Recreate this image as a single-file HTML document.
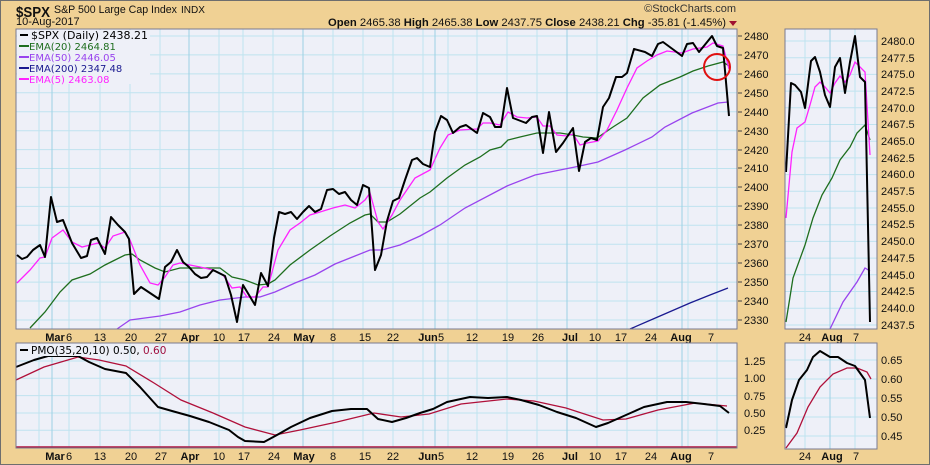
<!DOCTYPE html>
<html><head><meta charset="utf-8"><style>
html,body{margin:0;padding:0;background:#f0d194;}
svg{display:block;font-family:"Liberation Sans",Arial,sans-serif;}
</style></head><body>
<svg width="930" height="465" viewBox="0 0 930 465" xmlns="http://www.w3.org/2000/svg">
<rect x="0.5" y="0.5" width="929" height="464" fill="#f0d194" stroke="#6e6e6e"/>
<!-- header -->
<text x="16" y="17" font-size="15" font-weight="bold" fill="#111" textLength="34" lengthAdjust="spacingAndGlyphs">$SPX</text>
<text x="54" y="13" font-size="11" fill="#111" textLength="123" lengthAdjust="spacingAndGlyphs">S&amp;P 500 Large Cap Index</text>
<text x="181" y="13" font-size="10" fill="#111">INDX</text>
<text x="16" y="25" font-size="11" fill="#111">10-Aug-2017</text>
<text x="736" y="12" font-size="11" fill="#333" text-anchor="end">©StockCharts.com</text>
<text x="328" y="26" font-size="11" fill="#111" textLength="398" lengthAdjust="spacingAndGlyphs"><tspan font-weight="bold">Open</tspan> 2465.38  <tspan font-weight="bold">High</tspan> 2465.38  <tspan font-weight="bold">Low</tspan> 2437.75  <tspan font-weight="bold">Close</tspan> 2438.21  <tspan font-weight="bold">Chg</tspan> -35.81 (-1.45%)</text>
<polygon points="729,21 737,21 733,26" fill="#a01030"/>

<!-- main panel -->
<rect x="16" y="29" width="721" height="300" fill="#eef0f8"/>
<g stroke="#bfe3ef" stroke-width="1">
<line x1="16" x2="737" y1="36" y2="36"/><line x1="16" x2="737" y1="54.9" y2="54.9"/><line x1="16" x2="737" y1="73.9" y2="73.9"/><line x1="16" x2="737" y1="92.8" y2="92.8"/><line x1="16" x2="737" y1="111.7" y2="111.7"/><line x1="16" x2="737" y1="130.7" y2="130.7"/><line x1="16" x2="737" y1="149.6" y2="149.6"/><line x1="16" x2="737" y1="168.5" y2="168.5"/><line x1="16" x2="737" y1="187.4" y2="187.4"/><line x1="16" x2="737" y1="206.4" y2="206.4"/><line x1="16" x2="737" y1="225.3" y2="225.3"/><line x1="16" x2="737" y1="244.2" y2="244.2"/><line x1="16" x2="737" y1="263.2" y2="263.2"/><line x1="16" x2="737" y1="282.1" y2="282.1"/><line x1="16" x2="737" y1="301" y2="301"/><line x1="16" x2="737" y1="320" y2="320"/>
<line x1="39" x2="39" y1="29" y2="329"/><line x1="69" x2="69" y1="29" y2="329"/><line x1="100" x2="100" y1="29" y2="329"/><line x1="130" x2="130" y1="29" y2="329"/><line x1="160" x2="160" y1="29" y2="329"/><line x1="219" x2="219" y1="29" y2="329"/><line x1="243" x2="243" y1="29" y2="329"/><line x1="273" x2="273" y1="29" y2="329"/><line x1="333" x2="333" y1="29" y2="329"/><line x1="363" x2="363" y1="29" y2="329"/><line x1="393" x2="393" y1="29" y2="329"/><line x1="423" x2="423" y1="29" y2="329"/><line x1="448" x2="448" y1="29" y2="329"/><line x1="477" x2="477" y1="29" y2="329"/><line x1="507" x2="507" y1="29" y2="329"/><line x1="537" x2="537" y1="29" y2="329"/><line x1="597" x2="597" y1="29" y2="329"/><line x1="627" x2="627" y1="29" y2="329"/><line x1="657" x2="657" y1="29" y2="329"/><line x1="688" x2="688" y1="29" y2="329"/><line x1="717" x2="717" y1="29" y2="329"/>
</g>
<g stroke="#9cd1e4" stroke-width="1">
<line x1="52" x2="52" y1="29" y2="329"/><line x1="189" x2="189" y1="29" y2="329"/><line x1="303" x2="303" y1="29" y2="329"/><line x1="435" x2="435" y1="29" y2="329"/><line x1="567" x2="567" y1="29" y2="329"/><line x1="682" x2="682" y1="29" y2="329"/>
</g>
<polyline fill="none" stroke="#1a1a90" stroke-width="1.3" points="630,329 660,316 690,303 710,295 728,288"/>
<polyline fill="none" stroke="#9944ee" stroke-width="1.3" points="117,329 130,320 160,316 180,312 200,305 220,300 245,297 260,297 275,292 295,283 315,275 335,264 355,256 370,250 382,250 400,245 420,236 440,225 465,208 507,186 535,175 575,167 598,162 625,150 652,137 665,127 692,113 718,103 728,102"/>
<polyline fill="none" stroke="#1e6e1e" stroke-width="1.3" points="30,328 45,312 60,292 72,280 90,274 105,265 115,260 125,255 132,254 140,260 155,268 165,272 180,268 200,268 220,268 232,277 245,280 258,285 268,284 275,280 290,265 310,250 330,236 350,223 365,215 370,214 378,222 387,222 400,214 420,198 430,192 447,178 465,165 480,157 490,150 501,147 508,140 520,137 537,133 547,133 560,133 573,135 583,137 597,138 613,127 627,118 643,98 660,85 680,77 693,71 708,66 723,62 729,66"/>
<polyline fill="none" stroke="#ff22ff" stroke-width="1.3" points="17,283 30,270 40,258 45,257 52,238 63,230 72,242 82,247 90,245 98,243 105,248 113,236 125,232 130,240 140,265 150,283 158,285 165,277 173,265 180,263 190,265 200,267 213,270 223,275 232,288 240,287 247,297 255,297 263,287 268,287 278,250 290,230 300,223 310,215 320,212 333,208 345,205 355,208 365,200 370,193 378,222 383,229 392,215 400,200 415,178 430,170 440,148 448,135 460,130 477,129 483,123 490,123 500,125 508,112 517,117 527,118 537,117 543,126 550,126 557,135 567,136 573,134 580,145 587,143 598,141 607,130 617,110 627,88 637,68 647,61 657,55 667,51 682,53 693,49 707,47 713,43 723,46 729,69"/>
<polyline fill="none" stroke="#000" stroke-width="2" stroke-linejoin="round" points="17,255 22,259 27,257 33,250 40,245 45,257 51,197 57,222 63,220 72,243 81,258 87,256 91,240 97,238 105,254 111,217 118,225 125,232 129,239 134,294 141,287 147,291 153,295 159,299 165,267 171,262 177,250 183,262 189,267 195,274 201,278 207,277 213,270 219,273 225,276 231,295 237,322 243,285 249,295 255,305 261,273 268,286 274,238 279,212 285,214 291,212 297,219 303,212 309,206 315,212 321,209 327,190 333,189 339,194 345,192 351,200 357,205 363,185 369,188 375,270 381,255 387,221 393,201 399,198 405,180 412,160 417,158 423,164 430,167 435,132 441,116 447,120 453,133 460,127 466,125 477,133 483,113 490,117 495,127 501,127 507,88 513,118 526,123 532,117 537,116 543,153 549,112 556,152 563,143 573,128 579,171 585,142 591,138 597,140 603,107 609,98 616,77 622,77 627,73 634,49 645,52 652,56 658,44 663,42 682,56 687,44 693,43 699,52 712,36 717,46 723,48 729,116"/>
<circle cx="717" cy="67" r="13" fill="none" stroke="#e01010" stroke-width="2"/>
<rect x="17" y="30" width="133" height="54" fill="#eef0f8"/>
<g font-family="'DejaVu Sans',sans-serif" font-size="10">
<line x1="20" x2="28" y1="35" y2="35" stroke="#000" stroke-width="2"/>
<text x="31" y="39" fill="#000" font-size="11">$SPX (Daily) 2438.21</text>
<line x1="19" x2="29" y1="46" y2="46" stroke="#1e6e1e" stroke-width="2"/><text x="29" y="50" fill="#1e6e1e">EMA(20) 2464.81</text>
<line x1="19" x2="29" y1="57" y2="57" stroke="#9944ee" stroke-width="2"/><text x="29" y="61" fill="#9944ee">EMA(50) 2446.05</text>
<line x1="19" x2="29" y1="68" y2="68" stroke="#1a1a90" stroke-width="2"/><text x="29" y="72" fill="#1a1a90">EMA(200) 2347.48</text>
<line x1="19" x2="29" y1="79" y2="79" stroke="#ff22ff" stroke-width="2"/><text x="29" y="83" fill="#ff22ff">EMA(5) 2463.08</text>
</g>
<rect x="16" y="29" width="721" height="300" fill="none" stroke="#7a7a90"/>
<g font-size="11" fill="#111">
<text x="744" y="40">2480</text><text x="744" y="59">2470</text><text x="744" y="78">2460</text><text x="744" y="97">2450</text><text x="744" y="116">2440</text><text x="744" y="135">2430</text><text x="744" y="154">2420</text><text x="744" y="172">2410</text><text x="744" y="191">2400</text><text x="744" y="210">2390</text><text x="744" y="229">2380</text><text x="744" y="248">2370</text><text x="744" y="267">2360</text><text x="744" y="286">2350</text><text x="744" y="305">2340</text><text x="744" y="324">2330</text>
</g>
<g stroke="#444"><line x1="738" x2="742" y1="36" y2="36"/><line x1="738" x2="742" y1="55" y2="55"/><line x1="738" x2="742" y1="74" y2="74"/><line x1="738" x2="742" y1="93" y2="93"/><line x1="738" x2="742" y1="112" y2="112"/><line x1="738" x2="742" y1="131" y2="131"/><line x1="738" x2="742" y1="150" y2="150"/><line x1="738" x2="742" y1="168" y2="168"/><line x1="738" x2="742" y1="187" y2="187"/><line x1="738" x2="742" y1="206" y2="206"/><line x1="738" x2="742" y1="225" y2="225"/><line x1="738" x2="742" y1="244" y2="244"/><line x1="738" x2="742" y1="263" y2="263"/><line x1="738" x2="742" y1="282" y2="282"/><line x1="738" x2="742" y1="301" y2="301"/><line x1="738" x2="742" y1="320" y2="320"/></g>

<g font-size="11" fill="#111" text-anchor="middle">
<g id="dl">
<text x="55" y="341" font-weight="bold">Mar</text><text x="69" y="341">6</text><text x="100" y="341">13</text><text x="131" y="341">20</text><text x="161" y="341">27</text><text x="190" y="341" font-weight="bold">Apr</text><text x="219" y="341">10</text><text x="244" y="341">17</text><text x="274" y="341">24</text><text x="304" y="341" font-weight="bold">May</text><text x="333" y="341">8</text><text x="365" y="341">15</text><text x="393" y="341">22</text><text x="428" y="341" font-weight="bold">Jun</text><text x="441" y="341">5</text><text x="472" y="341">12</text><text x="508" y="341">19</text><text x="538" y="341">26</text><text x="570" y="341" font-weight="bold">Jul</text><text x="595" y="341">10</text><text x="621" y="341">17</text><text x="651" y="341">24</text><text x="681" y="341" font-weight="bold">Aug</text><text x="711" y="341">7</text>
<text x="805" y="341">24</text><text x="832" y="341" font-weight="bold">Aug</text><text x="856" y="341">7</text>
</g>
<use href="#dl" y="119"/>
</g>

<rect x="785" y="29" width="92" height="300" fill="#eef0f8"/>
<g stroke="#bfe3ef">
<line x1="785" x2="877" y1="41" y2="41"/><line x1="785" x2="877" y1="57.7" y2="57.7"/><line x1="785" x2="877" y1="74.4" y2="74.4"/><line x1="785" x2="877" y1="91.1" y2="91.1"/><line x1="785" x2="877" y1="107.8" y2="107.8"/><line x1="785" x2="877" y1="124.5" y2="124.5"/><line x1="785" x2="877" y1="141.2" y2="141.2"/><line x1="785" x2="877" y1="157.9" y2="157.9"/><line x1="785" x2="877" y1="174.6" y2="174.6"/><line x1="785" x2="877" y1="191.3" y2="191.3"/><line x1="785" x2="877" y1="208" y2="208"/><line x1="785" x2="877" y1="224.7" y2="224.7"/><line x1="785" x2="877" y1="241.4" y2="241.4"/><line x1="785" x2="877" y1="258.1" y2="258.1"/><line x1="785" x2="877" y1="274.8" y2="274.8"/><line x1="785" x2="877" y1="291.5" y2="291.5"/><line x1="785" x2="877" y1="308.2" y2="308.2"/><line x1="785" x2="877" y1="325" y2="325"/>
<line x1="805" x2="805" y1="29" y2="329"/><line x1="855" x2="855" y1="29" y2="329"/>
</g>
<line x1="830" x2="830" y1="29" y2="329" stroke="#9cd1e4"/>
<polyline fill="none" stroke="#9944ee" stroke-width="1.3" points="830,329 843,302 857,282 865,268 870,271"/>
<polyline fill="none" stroke="#1e6e1e" stroke-width="1.3" points="786,322 793,278 805,245 813,218 822,195 832,178 840,160 850,147 857,133 865,125 870,140"/>
<polyline fill="none" stroke="#ff22ff" stroke-width="1.3" points="786,218 792,152 797,128 805,122 810,105 815,87 820,82 825,87 830,93 835,83 840,76 845,82 850,75 855,62 860,67 865,72 870,155"/>
<polyline fill="none" stroke="#000" stroke-width="2" stroke-linejoin="round" points="786,172 791,83 795,85 801,92 805,108 811,61 815,57 820,72 825,95 830,107 835,67 840,58 845,93 850,62 855,36 860,77 865,82 870,322"/>
<rect x="785" y="29" width="92" height="300" fill="none" stroke="#7a7a90"/>
<g font-size="11" fill="#111">
<text x="881" y="45">2480.0</text><text x="881" y="62">2477.5</text><text x="881" y="78">2475.0</text><text x="881" y="95">2472.5</text><text x="881" y="112">2470.0</text><text x="881" y="128">2467.5</text><text x="881" y="145">2465.0</text><text x="881" y="162">2462.5</text><text x="881" y="178">2460.0</text><text x="881" y="195">2457.5</text><text x="881" y="212">2455.0</text><text x="881" y="228">2452.5</text><text x="881" y="245">2450.0</text><text x="881" y="262">2447.5</text><text x="881" y="279">2445.0</text><text x="881" y="295">2442.5</text><text x="881" y="312">2440.0</text><text x="881" y="329">2437.5</text>
</g>

<rect x="16" y="343" width="721" height="105" fill="#eef0f8"/>
<g stroke="#bfe3ef">
<line x1="16" x2="737" y1="361" y2="361"/><line x1="16" x2="737" y1="378.3" y2="378.3"/><line x1="16" x2="737" y1="395.6" y2="395.6"/><line x1="16" x2="737" y1="413" y2="413"/><line x1="16" x2="737" y1="430.3" y2="430.3"/>
<line x1="39" x2="39" y1="343" y2="448"/><line x1="69" x2="69" y1="343" y2="448"/><line x1="100" x2="100" y1="343" y2="448"/><line x1="130" x2="130" y1="343" y2="448"/><line x1="160" x2="160" y1="343" y2="448"/><line x1="219" x2="219" y1="343" y2="448"/><line x1="243" x2="243" y1="343" y2="448"/><line x1="273" x2="273" y1="343" y2="448"/><line x1="333" x2="333" y1="343" y2="448"/><line x1="363" x2="363" y1="343" y2="448"/><line x1="393" x2="393" y1="343" y2="448"/><line x1="423" x2="423" y1="343" y2="448"/><line x1="448" x2="448" y1="343" y2="448"/><line x1="477" x2="477" y1="343" y2="448"/><line x1="507" x2="507" y1="343" y2="448"/><line x1="537" x2="537" y1="343" y2="448"/><line x1="597" x2="597" y1="343" y2="448"/><line x1="627" x2="627" y1="343" y2="448"/><line x1="657" x2="657" y1="343" y2="448"/><line x1="688" x2="688" y1="343" y2="448"/><line x1="717" x2="717" y1="343" y2="448"/>
</g>
<g stroke="#9cd1e4">
<line x1="52" x2="52" y1="343" y2="448"/><line x1="189" x2="189" y1="343" y2="448"/><line x1="303" x2="303" y1="343" y2="448"/><line x1="435" x2="435" y1="343" y2="448"/><line x1="567" x2="567" y1="343" y2="448"/><line x1="682" x2="682" y1="343" y2="448"/>
</g>
<line x1="16" x2="737" y1="447" y2="447" stroke="#b0103a" stroke-width="1.5"/>
<polyline fill="none" stroke="#b0103a" stroke-width="1.3" points="16,380 44,367 78,357 99,360 126,366 154,383 181,400 213,413 245,427 275,435 300,430 337,422 374,413 401,417 429,414 461,404 507,399 534,401 566,408 603,420 626,419 658,410 695,403 727,406"/>
<polyline fill="none" stroke="#000" stroke-width="2" stroke-linejoin="round" points="16,367 34,360 48,356 78,356 89,362 105,369 126,373 140,387 158,407 172,411 190,416 209,422 229,430 238,437 245,441 264,442 277,435 291,427 310,418 332,411 351,409 367,409 378,419 392,422 406,418 420,413 433,409 447,402 470,397 488,398 507,397 521,400 539,405 557,412 576,418 596,427 608,423 626,415 644,407 667,402 686,402 704,404 720,406 729,413"/>
<rect x="17" y="344" width="105" height="12" fill="#eef0f8"/>
<line x1="20" x2="28" y1="350" y2="350" stroke="#000" stroke-width="2"/>
<text x="31" y="354" font-family="'DejaVu Sans',sans-serif" font-size="10.5" fill="#000">PMO(35,20,10) 0.50, <tspan fill="#a01040">0.60</tspan></text>
<rect x="16" y="343" width="721" height="105" fill="none" stroke="#7a7a90"/>
<g font-size="11" fill="#111">
<text x="744" y="365">1.25</text><text x="744" y="382">1.00</text><text x="744" y="400">0.75</text><text x="744" y="417">0.50</text><text x="744" y="434">0.25</text>
</g>

<rect x="785" y="343" width="92" height="106" fill="#eef0f8"/>
<g stroke="#bfe3ef">
<line x1="785" x2="877" y1="360" y2="360"/><line x1="785" x2="877" y1="379" y2="379"/><line x1="785" x2="877" y1="398" y2="398"/><line x1="785" x2="877" y1="417" y2="417"/><line x1="785" x2="877" y1="436" y2="436"/>
<line x1="805" x2="805" y1="343" y2="449"/><line x1="855" x2="855" y1="343" y2="449"/>
</g>
<line x1="830" x2="830" y1="343" y2="449" stroke="#9cd1e4"/>
<polyline fill="none" stroke="#b0103a" stroke-width="1.3" points="786,448 797,433 808,407 820,387 833,374 847,368 857,368 867,372 871,379"/>
<polyline fill="none" stroke="#000" stroke-width="2" stroke-linejoin="round" points="786,428 792,400 799,380 807,370 813,357 820,351 830,357 838,357 847,363 855,366 865,380 870,418"/>
<rect x="785" y="343" width="92" height="106" fill="none" stroke="#7a7a90"/>
<g font-size="11" fill="#111">
<text x="881" y="364">0.65</text><text x="881" y="383">0.60</text><text x="881" y="402">0.55</text><text x="881" y="421">0.50</text><text x="881" y="440">0.45</text>
</g>
</svg>
</body></html>
